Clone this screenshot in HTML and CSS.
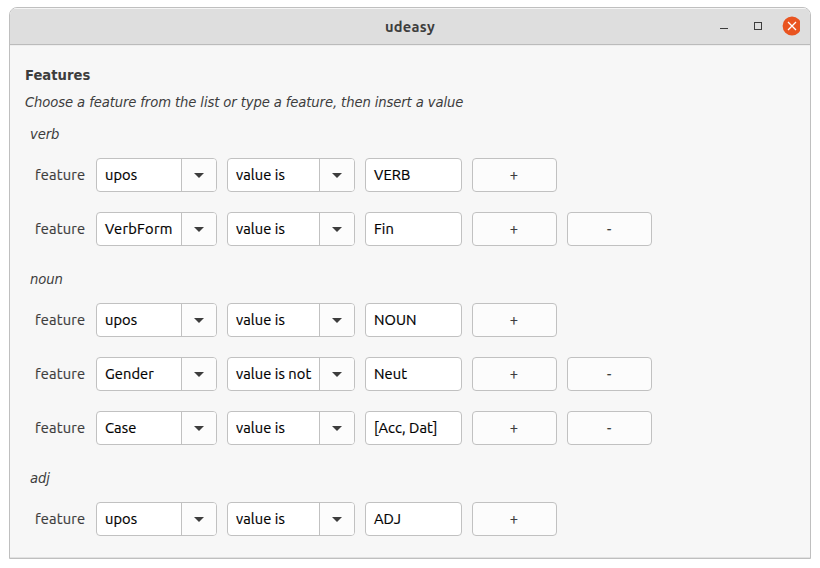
FILE: index.html
```
<!DOCTYPE html>
<html lang="en">
<head>
<meta charset="utf-8">
<title>udeasy</title>
<link rel="stylesheet" href="styles.css">
</head>
<body>
<div class="window">
  <header class="titlebar">
    <span class="title">udeasy</span>
    <div class="controls">
      <svg width="90" height="24" viewBox="0 0 90 24">
        <path d="M10 14.5h8" stroke="#3d3d3d" fill="none"/>
        <rect x="44.5" y="8.5" width="7" height="7" stroke="#3d3d3d" fill="none"/>
        <circle cx="82" cy="12" r="9.4" fill="#e95420"/>
        <path d="M78 8l8 8M86 8l-8 8" stroke="#fff" stroke-width="1.3" fill="none"/>
      </svg>
    </div>
  </header>
  <main>
    <h1>Features</h1>
    <p class="hint">Choose a feature from the list or type a feature, then insert a value</p>
    <section>
      <h2>verb</h2>
      <div class="row"><span class="label">feature</span><div class="combo name"><span class="text">upos</span><i class="drop"></i></div><div class="combo op"><span class="text">value is</span><i class="drop"></i></div><div class="entry">VERB</div><button>+</button></div>
      <div class="row"><span class="label">feature</span><div class="combo name"><span class="text wide">VerbForm</span><i class="drop"></i></div><div class="combo op"><span class="text">value is</span><i class="drop"></i></div><div class="entry">Fin</div><button>+</button><button>-</button></div>
    </section>
    <section>
      <h2>noun</h2>
      <div class="row"><span class="label">feature</span><div class="combo name"><span class="text">upos</span><i class="drop"></i></div><div class="combo op"><span class="text">value is</span><i class="drop"></i></div><div class="entry">NOUN</div><button>+</button></div>
      <div class="row"><span class="label">feature</span><div class="combo name"><span class="text">Gender</span><i class="drop"></i></div><div class="combo op"><span class="text">value is not</span><i class="drop"></i></div><div class="entry">Neut</div><button>+</button><button>-</button></div>
      <div class="row"><span class="label">feature</span><div class="combo name"><span class="text">Case</span><i class="drop"></i></div><div class="combo op"><span class="text">value is</span><i class="drop"></i></div><div class="entry">[Acc, Dat]</div><button>+</button><button>-</button></div>
    </section>
    <section>
      <h2>adj</h2>
      <div class="row"><span class="label">feature</span><div class="combo name"><span class="text">upos</span><i class="drop"></i></div><div class="combo op"><span class="text">value is</span><i class="drop"></i></div><div class="entry">ADJ</div><button>+</button></div>
    </section>
  </main>
</div>
</body>
</html>
```
FILE: styles.css
```
* { box-sizing: border-box; }
body {
  margin: 0;
  padding: 7px 9px 9px;
  height: 568px;
  background: #fff;
  color: #3d3d3d;
  font: 14.67px/20px "Ubuntu", "Noto Sans", sans-serif;
}
.window {
  height: 552px;
  border: 1px solid #bfbfbf;
  border-radius: 8px 8px 0 0;
  background: #f7f7f7;
  box-shadow: inset 0 -1px #e2e2e2;
  overflow: hidden;
}
.titlebar {
  display: grid;
  grid-template-columns: 1fr auto 1fr;
  align-items: center;
  height: 37px;
  background: #dedede;
  border-bottom: 1px solid #bbb;
  box-shadow: inset 0 1px #f5f5f5, 0 1px #eee;
}
.title { grid-column: 2; padding-top: 2px; font-weight: 700; letter-spacing: 0.25px; }
.controls { justify-self: end; height: 24px; padding-right: 10px; }
.controls svg { display: block; }
main { padding: 20px 15px 0; }
h1, h2, p { margin: 0; line-height: 20px; }
h1, h2, .hint { font-family: "DejaVu Sans Condensed", "DejaVu Sans", sans-serif; font-stretch: condensed; font-size: 14.67px; }
h1 { font-weight: 700; }
.hint { margin-top: 7px; font-style: italic; letter-spacing: -0.11px; }
section { margin-top: 12px; }
section + section { margin-top: 23px; }
h2 { padding-left: 5px; margin-bottom: 14px; font-weight: 400; font-style: italic; letter-spacing: -0.11px; }
.row { display: flex; align-items: center; gap: 10px; height: 34px; padding-left: 10px; white-space: nowrap; -webkit-text-stroke: 0.2px; }
.row + .row { margin-top: 20px; }
.label { width: 51px; letter-spacing: 0.18px; }
.combo, .entry, button {
  height: 34px;
  border: 1px solid #c1c1c1;
  border-radius: 4px;
  background: #fff;
  color: #000;
}
.combo { display: flex; overflow: hidden; }
.name { width: 121px; }
.op { width: 128px; }
.text { flex: 1; padding-left: 8px; line-height: 32px; letter-spacing: 0.08px; }
.wide { letter-spacing: 0.28px; }
.drop {
  display: flex;
  align-items: center;
  justify-content: center;
  width: 35px;
  border-left: 1px solid #c1c1c1;
  background: #fcfcfc;
}
.drop::before {
  content: "";
  margin-top: 1px;
  border: 5px solid transparent;
  border-top-color: #3d3d3d;
  border-bottom: 0;
}
.entry { width: 97px; padding-left: 8px; line-height: 32px; letter-spacing: 0.08px; }
button { width: 85px; padding: 0 1px 0 0; background: #fcfcfc; color: #3d3d3d; font: inherit; }
```
